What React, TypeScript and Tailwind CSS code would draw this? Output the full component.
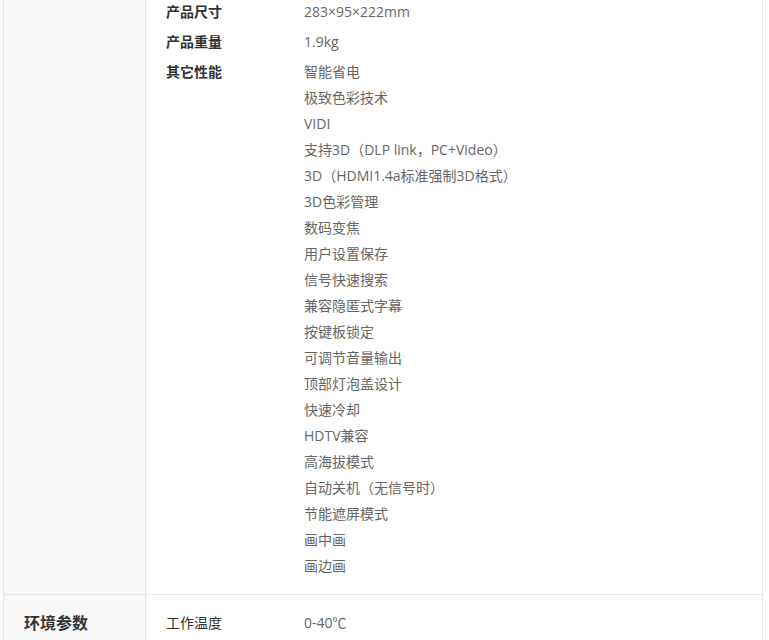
const features = [
  "智能省电",
  "极致色彩技术",
  "VIDI",
  "支持3D（DLP link，PC+Video）",
  "3D（HDMI1.4a标准强制3D格式）",
  "3D色彩管理",
  "数码变焦",
  "用户设置保存",
  "信号快速搜索",
  "兼容隐匿式字幕",
  "按键板锁定",
  "可调节音量输出",
  "顶部灯泡盖设计",
  "快速冷却",
  "HDTV兼容",
  "高海拔模式",
  "自动关机（无信号时）",
  "节能遮屏模式",
  "画中画",
  "画边画",
];

const sections = [
  {
    title: "",
    bold: true,
    items: [
      { label: "产品尺寸", values: ["283×95×222mm"] },
      { label: "产品重量", values: ["1.9kg"] },
      { label: "其它性能", values: features },
    ],
  },
  {
    title: "环境参数",
    bold: false,
    items: [{ label: "工作温度", values: ["0-40℃"] }],
  },
];

export default function App() {
  return (
    <div
      className="min-h-[640px] overflow-hidden bg-white"
      style={{ fontFamily: '"Open Sans", "Noto Sans CJK SC", sans-serif' }}
    >
      <div className="-mt-[17px] ml-[3px] w-[760px] border border-[#e6e6e6]">
        {sections.map((section, i) => (
          <div
            key={i}
            className={`flex ${i > 0 ? "border-t border-[#e6e6e6]" : ""}`}
          >
            <div className="w-[142px] shrink-0 border-r border-[#e6e6e6] bg-[#f9f9f9] pl-[20px] pt-[15px]">
              {section.title && (
                <div className="text-[16px] font-bold leading-[26px] text-[#333]">
                  {section.title}
                </div>
              )}
            </div>
            <div className="flex-1 pb-[11px] pl-[20px] pt-[15px]">
              {section.items.map((item) => (
                <div key={item.label} className="mb-[4px] flex text-[14px] leading-[26px]">
                  <div
                    className={`w-[138px] shrink-0 text-[#333] ${
                      section.bold ? "font-bold" : ""
                    }`}
                  >
                    {item.label}
                  </div>
                  <div className="text-[#666]">
                    {item.values.map((v) => (
                      <div key={v}>{v}</div>
                    ))}
                  </div>
                </div>
              ))}
            </div>
          </div>
        ))}
      </div>
    </div>
  );
}
